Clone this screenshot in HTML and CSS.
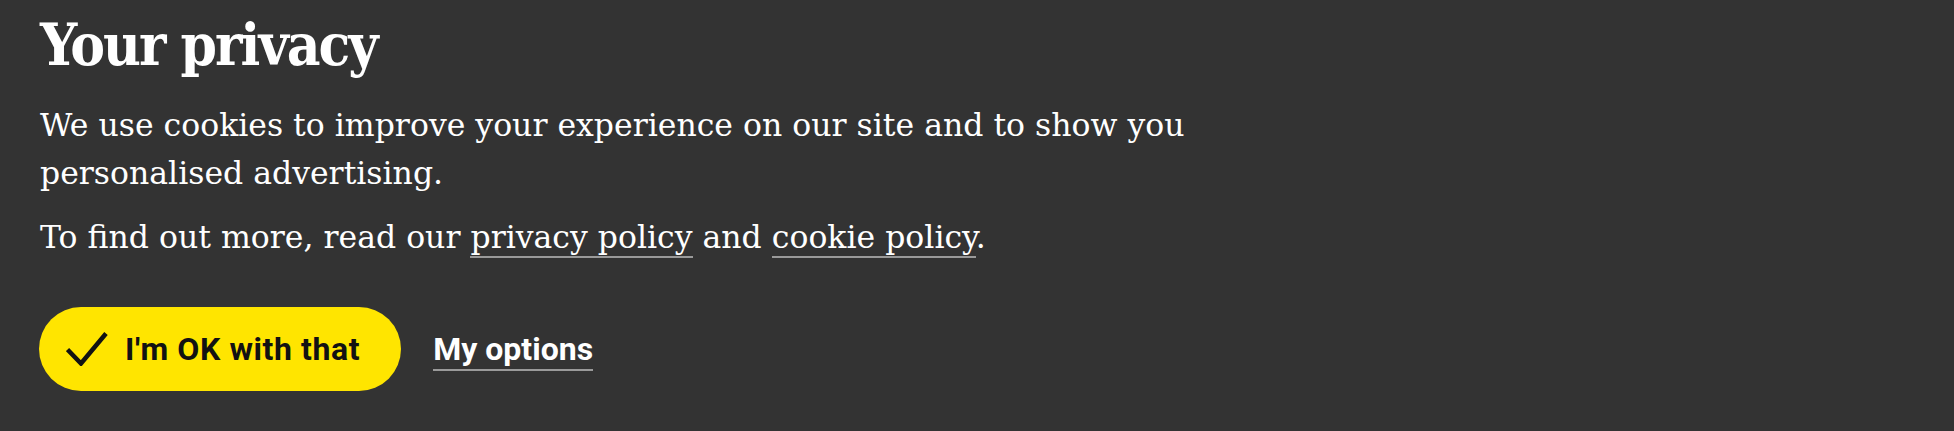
FILE: index.html
```html
<!DOCTYPE html>
<html lang="en">
<head>
<meta charset="utf-8">
<title>Your privacy</title>
<link rel="stylesheet" href="styles.css">
</head>
<body>
<div class="banner">
  <div class="content">
    <h2 class="title">Your privacy</h2>
    <p class="text">We use cookies to improve your experience on our site and to show you personalised advertising.</p>
    <p class="text">To find out more, read our <a class="link" href="#">privacy policy</a> and <a class="link" href="#">cookie policy</a>.</p>
    <div class="actions">
      <button class="ok-btn" type="button">
        <svg class="check" width="42" height="34" viewBox="0 0 42 34" aria-hidden="true"><path d="M1.5 17.5 L15 31.5 L40 1.5" fill="none" stroke="#121212" stroke-width="4.5"/></svg>
        <span>I'm OK with that</span>
      </button>
      <a class="options" href="#">My options</a>
    </div>
  </div>
</div>
</body>
</html>
```

FILE: styles.css
```css
html, body {
  margin: 0;
  padding: 0;
  background: #333333;
}
.banner {
  background: #333333;
  height: 431px;
  box-sizing: border-box;
  padding: 13px 0 0 40px;
  color: #ffffff;
}
.content {
  width: 1200px;
}
.title {
  margin: 0;
  font-family: "DejaVu Serif", serif;
  font-stretch: condensed;
  font-weight: 700;
  font-size: 58px;
  line-height: 64px;
  letter-spacing: -2px;
}
.text {
  margin: 24px 0 0 0;
  font-family: "DejaVu Serif", serif;
  font-size: 31.5px;
  line-height: 48px;
}
.text + .text {
  margin-top: 16px;
}
.link {
  color: #ffffff;
  text-decoration: none;
  border-bottom: 2px solid #9a9a9a;
  padding-bottom: 1px;
}
.actions {
  display: flex;
  align-items: center;
  gap: 32px;
  margin-top: 46px;
  margin-left: -1px;
}
.ok-btn {
  display: flex;
  align-items: center;
  gap: 17px;
  height: 84px;
  box-sizing: border-box;
  padding: 0 41px 0 27px;
  border: none;
  border-radius: 42px;
  background: #ffe500;
  color: #121212;
  font-family: Roboto, "Liberation Sans", sans-serif;
  font-weight: 700;
  font-size: 32px;
  letter-spacing: 0.6px;
  cursor: pointer;
}
.check {
  display: block;
  flex: none;
}
.options {
  color: #ffffff;
  font-family: Roboto, "Liberation Sans", sans-serif;
  font-weight: 700;
  font-size: 32px;
  text-decoration: none;
  border-bottom: 2px solid #9a9a9a;
  line-height: 40px;
  margin-top: 2px;
}
```
